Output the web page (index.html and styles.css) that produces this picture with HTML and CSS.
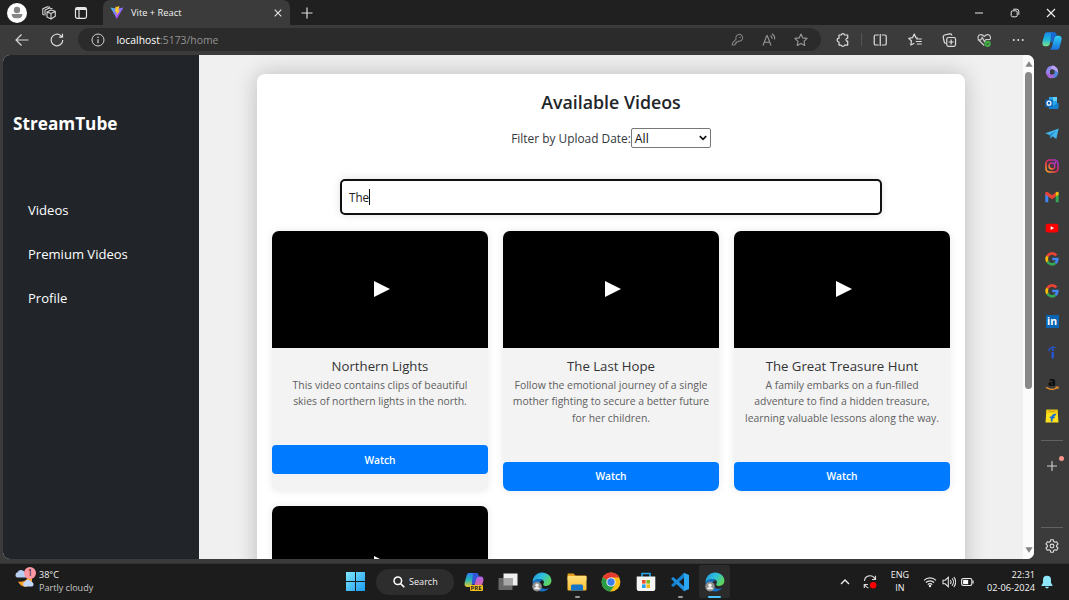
FILE: index.html
```html
<!DOCTYPE html>
<html lang="en">
<head>
<meta charset="utf-8">
<title>Vite + React</title>
<link rel="stylesheet" href="styles.css">
</head>
<body>
<svg class="defs" width="0" height="0" aria-hidden="true">
  <defs>
    <linearGradient id="cop1" x1="0" y1="0" x2="0" y2="1"><stop offset="0" stop-color="#1b86e8"/><stop offset=".5" stop-color="#19b4dc"/><stop offset="1" stop-color="#7fe08a"/></linearGradient>
    <linearGradient id="cop2" x1="0" y1="0" x2="0" y2="1"><stop offset="0" stop-color="#2fd0f2"/><stop offset="1" stop-color="#1a6fe0"/></linearGradient>
    <linearGradient id="pre1" x1="0" y1="0" x2="0" y2="1"><stop offset="0" stop-color="#2b7df0"/><stop offset=".5" stop-color="#27b6b4"/><stop offset="1" stop-color="#f0c929"/></linearGradient>
    <linearGradient id="pre2" x1="0" y1="0" x2="0" y2="1"><stop offset="0" stop-color="#a965f0"/><stop offset="1" stop-color="#f4627a"/></linearGradient>
    <linearGradient id="edg" x1="0" y1="0" x2="1" y2=".6"><stop offset="0" stop-color="#1e8fe0"/><stop offset=".5" stop-color="#2fc0dc"/><stop offset="1" stop-color="#5ed65a"/></linearGradient>
    <linearGradient id="win" x1="0" y1="0" x2="1" y2="1"><stop offset="0" stop-color="#7fe6ff"/><stop offset="1" stop-color="#1a9cf0"/></linearGradient>
    <linearGradient id="ig" x1="0" y1="1" x2="1" y2="0"><stop offset="0" stop-color="#ffb52e"/><stop offset=".45" stop-color="#f5264f"/><stop offset="1" stop-color="#9b2fe0"/></linearGradient>
    <linearGradient id="fold" x1="0" y1="0" x2="0" y2="1"><stop offset="0" stop-color="#ffe07a"/><stop offset="1" stop-color="#fbbd30"/></linearGradient>
    <linearGradient id="vite" x1="0" y1="0" x2="1" y2="1"><stop offset="0" stop-color="#41c7ff"/><stop offset=".7" stop-color="#a948fb"/></linearGradient>
    <symbol id="google" viewBox="0 0 14 14"><g fill="none" stroke-width="2.7"><path d="M11.3 3.5A5.3 5.3 0 0 0 2.4 4.4" stroke="#ea4335"/><path d="M2.4 4.4A5.3 5.3 0 0 0 2.4 9.6" stroke="#fbbc05"/><path d="M2.4 9.6A5.3 5.3 0 0 0 10.5 11" stroke="#34a853"/><path d="M10.5 11A5.3 5.3 0 0 0 12.3 7H7.2" stroke="#4285f4"/></g></symbol>
    <symbol id="edge" viewBox="0 0 20 20"><path d="M.6 10.5C.6 4.8 4.8.6 10 .6c5.4 0 9.4 3.7 9.4 8 0 3.4-2.4 5.3-5.2 5.3-2 0-3-.7-3-1.5 0-.6.8-.9.8-2.3 0-1.9-1.9-3.2-4.4-3.2-3 0-5.500 1.300-7 3.600z" fill="url(#edg)"/><path d="M.6 10.500C2 8 4.500 6.900 7.600 6.900c1.400 0 2.700.5 3.500 1.300-2.300 0-3.700 1.500-3.700 3.600 0 3 2.900 5.100 6 5.100 1.600 0 2.900-.5 3.900-1.100C15.700 18.200 13 19.400 10 19.400 4.500 19.400.6 15.500.6 10.500z" fill="#1470c4"/><circle cx="5" cy="14.600" r="4.800" fill="#8f8f8f"/><circle cx="5" cy="13.200" r="1.700" fill="#f2f2f2"/><path d="M2.100 17.200a2.900 2.200 0 0 1 5.800 0z" fill="#f2f2f2"/></symbol>
  </defs>
</svg>

<div class="desktop">
  <header class="tabstrip">
    <div class="avatar"><svg viewBox="0 0 20 20"><circle cx="10" cy="10" r="10" fill="#fff"/><circle cx="10" cy="7" r="3.200" fill="#858585"/><path d="M4.700 11h10.600v.8a4 4 0 0 1-4 3.500H8.700a4 4 0 0 1-4-3.500z" fill="#858585"/></svg></div>
    <svg class="strip-icon" viewBox="0 0 14 14"><g fill="none" stroke="#d6d6d6" stroke-width="1.100" stroke-linejoin="round"><path d="M9 4 13.300 5.300v4.900L9 13 5 11V6zM5 6l4 1.500 4.200-2M9 7.500V13"/><path d="M10.500 2.800 7.500 2 3 4v5.500M8 1.200 5.300.700.800 2.800v5.500l1 .7"/></g></svg>
    <svg class="strip-icon workspace" viewBox="0 0 14 14"><rect x="1.500" y="1.700" width="11" height="10.600" rx="1.800" fill="none" stroke="#e6e6e6" stroke-width="1.200"/><path d="M1.500 3.500h11M5 3.500v8.500" stroke="#e6e6e6" stroke-width="1.200"/><path d="M2 2h10v2H2z" fill="#e6e6e6"/></svg>
    <div class="tab">
      <svg class="vite" viewBox="0 0 14 14"><path d="M.5 1.500 6.800 13 13.500 1.500 7 2.800z" fill="url(#vite)"/><path d="M9.500.300 5.500 1.100l-.3 5H6.700L6.200 9.500 9.900 4.500H8.200z" fill="#ffc82a"/></svg>
      <span class="tab-title">Vite + React</span>
      <svg class="close" viewBox="0 0 8 8"><path d="M.7.7l6.600 6.600M7.300.7.7 7.300" stroke="#e6e6e6" stroke-width="1.100"/></svg>
    </div>
    <svg class="new-tab" viewBox="0 0 12 12"><path d="M6 .5v11M.5 6h11" stroke="#dcdcdc" stroke-width="1.200"/></svg>
    <div class="window-controls">
      <svg viewBox="0 0 10 10"><path d="M1 5h8" stroke="#e8e8e8"/></svg>
      <svg viewBox="0 0 10 10"><rect x="1.200" y="2.800" width="6" height="6" rx="1.400" fill="none" stroke="#e8e8e8"/><path d="M3.200 1.200h3.600a2 2 0 0 1 2 2v3.600" fill="none" stroke="#e8e8e8"/></svg>
      <svg viewBox="0 0 10 10"><path d="M1 1l8 8M9 1 1 9" stroke="#f0f0f0" stroke-width="1.100"/></svg>
    </div>
  </header>

  <div class="browser">
    <div class="browser-main">
      <div class="toolbar">
        <svg class="nav-icon" viewBox="0 0 14 14"><path d="M13.500 7H1M6.500 1.500 1 7l5.500 5.500" fill="none" stroke="#d8d8d8" stroke-width="1.200"/></svg>
        <svg class="nav-icon" viewBox="0 0 14 14"><path d="M12.800 7A5.800 5.800 0 1 1 10.800 2.600L12.300 4M12.500 .8V4.200H9" fill="none" stroke="#d8d8d8" stroke-width="1.200"/></svg>
        <div class="address">
          <svg class="info" viewBox="0 0 14 14"><circle cx="7" cy="7" r="6" fill="none" stroke="#d0d0d0"/><path d="M7 6.200v4" stroke="#d0d0d0" stroke-width="1.200"/><circle cx="7" cy="4.200" r=".8" fill="#d0d0d0"/></svg>
          <span class="url"><b>localhost</b>:5173/home</span>
          <div class="address-actions">
            <svg viewBox="0 0 14 14"><g transform="translate(1.200 1) scale(.85)"><path d="M5.800 6A4 4 0 1 1 8.500 8.300L7.500 9.300H6.200V10.700H4.800V12.200L3.500 13H1.300V10.700z" fill="none" stroke="#858585" stroke-width="1.200"/><circle cx="10.300" cy="3.700" r=".9" fill="#858585"/></g></svg>
            <svg viewBox="0 0 14 14"><path d="M1 12.500 4.700 2.800h.6L9 12.500M2.300 9.300h5.500M8.500 2.500a3.200 3.200 0 0 1 1.500 3.300M10 .8a5.500 5.500 0 0 1 2.600 5.500" fill="none" stroke="#989898" stroke-width="1.100"/></svg>
            <svg viewBox="0 0 14 14"><path d="M7 1l1.800 3.900 4.300.5L10 8.300l.8 4.200L7 10.400l-3.800 2.100.8-4.200L.9 5.400l4.300-.5z" fill="none" stroke="#999" stroke-width="1.100" stroke-linejoin="round"/></svg>
          </div>
        </div>
        <svg class="extensions" viewBox="0 0 14 14"><path d="M3 2h2.300a1.700 1.700 0 0 1 3.300 0h3.100v3.200c-2.300-.3-2.300 3.300 0 3v3.900H8.500a1.700 1.700 0 0 1-3.300 0H3V9a1.900 1.900 0 0 1 0-3.800z" fill="none" stroke="#dedede" stroke-width="1.200" stroke-linejoin="round"/></svg>
        <span class="tool-divider"></span>
        <div class="tools">
          <svg viewBox="0 0 14 14"><path d="M5.500 2H2.300Q1 2 1 3.300v7.400Q1 12 2.300 12h3.200M8.500 2h3.200Q13 2 13 3.300v7.400q0 1.300-1.300 1.300H8.500M7 1v12" fill="none" stroke="#dedede" stroke-width="1.200"/></svg>
          <svg viewBox="0 0 14 14"><path d="M9.500 5 7.700 4.700 6 1 4.300 4.700.5 5.300 3.200 8l-.7 4L6 10.200M8 6h5.500M7.500 8.500h6M8.500 11h5" fill="none" stroke="#dedede" stroke-width="1.200" stroke-linejoin="round"/></svg>
          <svg viewBox="0 0 14 14"><rect x="4.500" y="4.500" width="8.800" height="8.800" rx="1.800" fill="none" stroke="#dedede" stroke-width="1.200"/><path d="M3.500 10.500A2 2 0 0 1 2 9L.9 4A2 2 0 0 1 2.300 2L7.500.800A2 2 0 0 1 9.700 2.500M8.900 6.500v5M6.400 9h5" fill="none" stroke="#dedede" stroke-width="1.200"/></svg>
          <svg viewBox="0 0 14 14"><path d="M7 12.500 1.500 7C-.2 4.500 1 1.700 3.700 1.700 5.500 1.700 6.500 2.800 7 3.500c.5-.7 1.500-1.800 3.300-1.800 2.700 0 3.900 2.800 2.200 5.300M.5 6.800h3L5 4.500l2.200 4 1.300-2h4" fill="none" stroke="#cdcdcd" stroke-width="1.200"/><circle cx="10.300" cy="10.800" r="3.200" fill="#45a848"/><path d="M8.900 10.800l1 1 1.800-2" stroke="#214d24" fill="none" stroke-width=".8"/></svg>
          <svg viewBox="0 0 14 14"><g fill="#e2e2e2"><circle cx="2.500" cy="7" r="1"/><circle cx="7" cy="7" r="1"/><circle cx="11.500" cy="7" r="1"/></g></svg>
        </div>
      </div>

      <div class="viewport">
        <aside class="app-sidebar">
          <h1 class="brand">StreamTube</h1>
          <nav class="menu"><a>Videos</a><a>Premium Videos</a><a>Profile</a></nav>
        </aside>
        <main class="page">
          <section class="panel">
            <h2 class="heading">Available Videos</h2>
            <div class="filter"><label>Filter by Upload Date:</label><div class="select"><span>All</span><svg viewBox="0 0 8 6"><path d="M.8 1.200 4 4.400 7.200 1.200" fill="none" stroke="#111" stroke-width="1.700"/></svg></div></div>
            <div class="search"><span>The</span><i class="caret"></i></div>
            <div class="grid">
              <article class="card"><div class="video"><svg viewBox="0 0 16 16"><path d="M0 0 16 8 0 16z" fill="#fff"/></svg></div><h3>Northern Lights</h3><p>This video contains clips of beautiful<br>skies of northern lights in the north.</p><button>Watch</button></article>
              <article class="card"><div class="video"><svg viewBox="0 0 16 16"><path d="M0 0 16 8 0 16z" fill="#fff"/></svg></div><h3>The Last Hope</h3><p>Follow the emotional journey of a single<br>mother fighting to secure a better future<br>for her children.</p><button>Watch</button></article>
              <article class="card"><div class="video"><svg viewBox="0 0 16 16"><path d="M0 0 16 8 0 16z" fill="#fff"/></svg></div><h3>The Great Treasure Hunt</h3><p>A family embarks on a fun-filled<br>adventure to find a hidden treasure,<br>learning valuable lessons along the way.</p><button>Watch</button></article>
              <article class="card"><div class="video"><svg viewBox="0 0 16 16"><path d="M0 0 16 8 0 16z" fill="#fff"/></svg></div></article>
            </div>
          </section>
        </main>
        <div class="scrollbar">
          <svg viewBox="0 0 8 6"><path d="M4 .3 7.700 5.700H.3z" fill="#858585"/></svg>
          <span class="thumb"></span>
          <svg viewBox="0 0 8 6"><path d="M4 5.700 7.700.3H.3z" fill="#858585"/></svg>
        </div>
      </div>
    </div>

    <aside class="edge-bar">
      <div class="app copilot"><svg viewBox="0 0 20 20"><path d="M4.800 1.200h7.500c-1.300.5-1.800 1.600-2.300 3.500L8 12.200c-.6 2.200-1.400 3-3 3H3.200C.7 15.200-.1 13 .6 10.500L2.300 4c.5-1.800 1.200-2.800 2.500-2.800z" fill="url(#cop1)"/><path d="M15.200 18.800H7.700c1.300-.5 1.800-1.600 2.300-3.500l2-7.500c.6-2.200 1.400-3 3-3h1.800c2.500 0 3.300 2.200 2.600 4.700L17.700 16c-.5 1.800-1.200 2.800-2.500 2.800z" fill="url(#cop2)"/><path d="M9 1.200h3.300c1.800 0 2 1.600 2.700 3.600-1.700 0-2.500 1-3 3L10.700 12 8.500 10z" fill="#1768cf"/></svg></div>
      <div class="app"><svg viewBox="0 0 14 14"><path d="M7.500.5 3.500 1.800Q1 4 .7 7.500L2.500 10.500 5 9V5.500L8.500 3.500z" fill="#8f86ee"/><path d="M7.500.5Q11 .8 12.800 4.500L13.300 8 9.500 8V5.500L5.500 3.300z" fill="#b9a2f5"/><path d="M13.300 7.500Q13 11 9.500 13L5.500 13.300 4.500 10.500 9.300 8.500 9.500 5z" fill="#4f86e0"/><path d="M.8 7.500Q2 12.500 5.500 13.300L8.500 12.800 9.300 9.500 5 9z" fill="#a466d8"/><path d="M5 5.300 7.300 4.200 9.500 5.500V8.500L7 9.800 5 8.800z" fill="#3b3b3b"/></svg></div>
      <div class="app"><svg viewBox="0 0 14 14"><path d="M4 1h8v9H4z" fill="#2aa6ea"/><path d="M8 1h4v4H8z" fill="#61d0fa"/><path d="M3 7l5 3 5.500-3.500V12q0 1-1 1H4z" fill="#1582d0"/><rect x=".3" y="3.500" width="7.500" height="7.500" rx=".8" fill="#0f65b8"/><ellipse cx="4" cy="7.200" rx="1.900" ry="2" fill="none" stroke="#fff" stroke-width="1.200"/></svg></div>
      <div class="app"><svg viewBox="0 0 14 14"><path d="M.3 6.200 13.700 1.500 11.300 12 7.500 9.300 5.500 11.500 4.500 8z" fill="#42b6ec"/><path d="M4.500 8 11.500 3.500 6 8.500l-.5 3z" fill="#1a78b8"/></svg></div>
      <div class="app"><svg viewBox="0 0 14 14"><rect x="1" y="1" width="12" height="12" rx="3.500" fill="none" stroke="url(#ig)" stroke-width="1.600"/><circle cx="7" cy="7" r="2.900" fill="none" stroke="url(#ig)" stroke-width="1.500"/><circle cx="10.500" cy="3.500" r=".9" fill="#d742c8"/></svg></div>
      <div class="app"><svg viewBox="0 0 14 14"><path d="M.3 3v9.200h3V6z" fill="#4285f4"/><path d="M13.700 3v9.200h-3V6z" fill="#34a853"/><path d="M.3 3Q1.500 1 3.300 2.500L7 5.300l3.700-2.800v4L7 9.200 3.300 6.500.3 4.500z" fill="#ea4335"/><path d="M10.700 2.500Q13 1 13.700 3v1.500l-3 2z" fill="#fbbc04"/></svg></div>
      <div class="app"><svg viewBox="0 0 14 14"><rect x=".7" y="2.700" width="12.600" height="8.800" rx="2" fill="#fe0000"/><path d="M5.700 5.200 9 7.100 5.700 9z" fill="#fff"/></svg></div>
      <div class="app"><svg><use href="#google"/></svg></div>
      <div class="app"><svg><use href="#google"/></svg></div>
      <div class="app"><span class="linkedin">in</span></div>
      <div class="app"><svg viewBox="0 0 14 14"><path d="M7.700 6v6.500" stroke="#2557e0" stroke-width="2.200"/><circle cx="7.700" cy="3.700" r="1.300" fill="#2557e0"/><path d="M3.500 5C4.500 1.500 7.500.200 10.500 1.800" fill="none" stroke="#2557e0" stroke-width="1.200"/></svg></div>
      <div class="app amazon"><span>a</span><svg viewBox="0 0 14 5"><path d="M1 1.200Q7 5.200 12 1.700M10.300 1H13v2" fill="none" stroke="#f0952a" stroke-width="1.200"/></svg></div>
      <div class="app"><svg viewBox="0 0 14 14"><path d="M1.500.7h11L13.500 13.500H.5z" fill="#ffe01b"/><path d="M1.500.7h11l.3 3.300H1.200z" fill="#f3c613"/><path d="M4.500 1v1.500h5V1" fill="none" stroke="#d0a410"/><path d="M11 5.700Q8 5 7.300 8L6.500 12.500M4.800 8.300h5" fill="none" stroke="#176bd6" stroke-width="1.800"/></svg></div>
      <span class="bar-line"></span>
      <div class="add"><svg viewBox="0 0 10 10"><path d="M5 0v10M0 5h10" stroke="#d0d0d0" stroke-width="1.100"/></svg><i></i></div>
      <span class="bar-line bottom"></span>
      <svg class="gear" viewBox="0 0 14 14"><path d="M5.700.8h2.600l.4 1.800 1.200.7 1.800-.6 1.300 2.300L11.600 6.300v1.400L13 9l-1.300 2.300-1.800-.6-1.200.7-.4 1.800H5.700l-.4-1.800-1.200-.7-1.800.6L1 9l1.400-1.300V6.300L1 5l1.300-2.300 1.800.6 1.200-.7z" fill="none" stroke="#dedede" stroke-width="1.100" stroke-linejoin="round"/><circle cx="7" cy="7" r="1.900" fill="none" stroke="#dedede" stroke-width="1.100"/></svg>
    </aside>
  </div>

  <footer class="taskbar">
    <div class="weather">
      <svg viewBox="0 0 22 22"><path d="M4 15.500Q9 16.500 12 14L15 9l3 3v5l-6 4q-5.500-.5-8-5.500z" fill="#f6a02e"/><path d="M3 11.500a2.800 2.800 0 0 1 .5-5.200A4 4 0 0 1 11 7l1 4.500z" fill="#b7cdf2"/><path d="M10.500 20.500a2.500 2.500 0 0 1 .5-4.700 3.500 3.500 0 0 1 6.500.3 2.300 2.300 0 0 1 .7 4.400z" fill="#c3d8fa"/></svg>
      <span class="badge">1</span>
      <div class="weather-text"><b>38°C</b><span>Partly cloudy</span></div>
    </div>
    <div class="dock">
      <svg class="start" viewBox="0 0 19 19"><path d="M0 0h9v9H0zM10 0h9v9h-9zM0 10h9v9H0zM10 10h9v9h-9z" fill="url(#win)"/></svg>
      <div class="task-search"><svg viewBox="0 0 12 12"><circle cx="4.800" cy="4.800" r="3.800" fill="none" stroke="#fff" stroke-width="1.500"/><path d="M7.600 7.600 11.300 11.300" stroke="#fff" stroke-width="1.600"/></svg><span>Search</span></div>
      <div class="task pre"><svg viewBox="0 0 20 20"><path d="M5 1h7.500C11 1.500 10.500 3 10 5L8 12c-.5 2-1.500 3-3 3H3.500C1 15 0 13 .7 10.500L2.500 4C3 2 3.700 1 5 1z" fill="url(#pre1)"/><path d="M9 1h3.500c1.800 0 2 1.600 2.700 3.600-1.700 0-2.500 1-3 3L10.700 12l-3 1z" fill="#3157d8"/><path d="M15 18H8c1-.5 1.500-1.500 2-3.500l2-7c.5-2 1.500-3 3-3h1.500c2.500 0 3.500 2 2.800 4.500L17.500 15c-.5 2-1.200 3-2.500 3z" fill="url(#pre2)"/></svg><em>PRE</em></div>
      <div class="task"><svg viewBox="0 0 20 20"><rect x="5.500" y="1.500" width="14" height="12" fill="#efefef"/><rect x=".5" y="6" width="14" height="12" fill="#686868"/><path d="M5.500 6h9v7.500h-9z" fill="#a7a7a7"/></svg></div>
      <div class="task"><svg><use href="#edge"/></svg></div>
      <div class="task open"><svg viewBox="0 0 20 20"><path d="M.5 2.500q0-1 1-1h5l2 2h10q1 0 1 1V8H.5z" fill="#e5a01f"/><rect x=".5" y="4" width="19" height="14.500" rx="1" fill="url(#fold)"/><path d="M4 18.500V14q0-1.500 1.500-1.500h9Q16 12.500 16 14v4.500z" fill="#1675c8"/></svg></div>
      <div class="task"><svg viewBox="0 0 20 20"><circle cx="10" cy="10" r="9.400" fill="#fbc116"/><path d="M10 10 1.700 5.500A9.400 9.400 0 0 1 18.300 5.500H10z" fill="#e33b2e"/><path d="M10 10 1.700 5.500A9.400 9.400 0 0 0 9.200 19.400L14 12.500z" fill="#2a9c48"/><circle cx="10" cy="10" r="4.600" fill="#fff"/><circle cx="10" cy="10" r="3.700" fill="#3b7ded"/></svg></div>
      <div class="task"><svg viewBox="0 0 20 20"><path d="M6 5V1.500h8V5" fill="none" stroke="#26a9e8" stroke-width="1.600"/><path d="M.7 4.500h18.600V17q0 2-2 2H2.700q-2 0-2-2z" fill="#f5f5f5"/><path d="M6 8h3.600v3.600H6z" fill="#f0502a"/><path d="M10.400 8H14v3.600h-3.600z" fill="#7fbb16"/><path d="M6 12.400h3.600V16H6z" fill="#1fa3ec"/><path d="M10.400 12.400H14V16h-3.600z" fill="#fdb913"/></svg></div>
      <div class="task open"><svg viewBox="0 0 20 20"><path d="M14 .8 19 3v14l-5 2.200z" fill="#2ba6f0"/><path d="M14 .8v5L3.200 15 1 13.300z" fill="#1580cf"/><path d="M14 19.200v-5L3.200 5 1 6.700z" fill="#1d8fdd"/></svg></div>
      <div class="task active"><svg><use href="#edge"/></svg></div>
    </div>
    <div class="tray">
      <svg class="chevron" viewBox="0 0 10 6"><path d="M1 5 5 1l4 4" fill="none" stroke="#f0f0f0" stroke-width="1.400"/></svg>
      <svg class="sync" viewBox="0 0 14 14"><path d="M1.500 6A5.500 5.500 0 0 1 12 4M12.500.800V4.500H9M5.500 13A5.500 5.500 0 0 1 2 10M1.300 13V9.500H5" fill="none" stroke="#d4d4d4" stroke-width="1.200"/><circle cx="10.200" cy="10.300" r="3.200" fill="#f00"/></svg>
      <div class="lang"><span>ENG</span><span>IN</span></div>
      <svg class="wifi" viewBox="0 0 14 12"><g fill="none" stroke="#e2e2e2" stroke-width="1.200"><path d="M1 4.300a8.500 8.500 0 0 1 12 0M2.900 6.500a5.800 5.800 0 0 1 8.200 0M4.800 8.600a3.100 3.100 0 0 1 4.400 0"/></g><circle cx="7" cy="10" r="1.200" fill="#eee"/></svg>
      <svg class="sound" viewBox="0 0 14 12"><path d="M1 4.200h2.200L6.300 1.300v9.400L3.200 7.800H1zM8.200 4a3 3 0 0 1 0 4M10 2.400a5.200 5.200 0 0 1 0 7.200M11.800 1a7.500 7.500 0 0 1 0 10" fill="none" stroke="#e2e2e2" stroke-width="1.100"/></svg>
      <svg class="battery" viewBox="0 0 14 10"><rect x=".7" y="1.200" width="11" height="7.600" rx="1.800" fill="none" stroke="#eee" stroke-width="1.200"/><path d="M2.300 2.700h5.400v4.600H2.300z" fill="#fff"/><path d="M13 3.500v3" stroke="#eee" stroke-width="1.200"/></svg>
      <div class="clock"><span>22:31</span><span>02-06-2024</span></div>
      <svg class="bell" viewBox="0 0 12 14"><path d="M6 .8a4 4 0 0 1 4 4v3l1.500 2.500v.7H.5v-.7L2 7.800v-3a4 4 0 0 1 4-4zM4.200 11.700h3.600a1.800 1.800 0 0 1-3.600 0z" fill="#8ee6fb"/></svg>
    </div>
  </footer>
</div>
</body>
</html>
```

FILE: styles.css
```css
* { box-sizing: border-box; }
body { margin: 0; font-family: "Open Sans", "Noto Sans", sans-serif; }
svg { display: block; flex: none; }
h1, h2, h3, p { margin: 0; }
.defs { position: absolute; }
.desktop { width: 1069px; height: 600px; overflow: hidden; display: flex; flex-direction: column; background: #3b3b3b; }

/* Tab strip */
.tabstrip { height: 25px; flex: none; background: #202020; display: flex; align-items: center; }
.avatar { width: 20px; height: 20px; margin-left: 7px; }
.avatar svg { width: 20px; height: 20px; }
.strip-icon { width: 14px; height: 14px; margin-left: 15px; }
.strip-icon.workspace { margin-left: 18px; }
.tab { width: 187px; height: 25px; margin-left: 15px; padding: 0 8px 0 7px; border-radius: 7px 7px 0 0; background: #3b3b3b; display: flex; align-items: center; }
.vite { width: 14px; height: 14px; }
.tab-title { margin-left: 7px; font-size: 9.300px; color: #f4f4f4; flex: 1; white-space: nowrap; }
.close { width: 8px; height: 8px; }
.new-tab { width: 12px; height: 12px; margin-left: 11px; }
.window-controls { margin-left: auto; display: flex; gap: 26px; padding-right: 13px; }
.window-controls svg { width: 10px; height: 10px; }

/* Browser frame */
.browser { flex: 1; display: flex; min-height: 0; }
.browser-main { width: 1035px; display: flex; flex-direction: column; padding: 0 1px 4px 3px; }
.toolbar { height: 30px; flex: none; display: flex; align-items: center; padding: 0 0 1px 12px; }
.nav-icon { width: 14px; height: 14px; margin-right: 20.500px; }
.address { width: 743px; height: 23px; flex: none; margin-left: -6px; border-radius: 12px; background: #2b2b2b; display: flex; align-items: center; padding: 0 4px 0 13px; }
.info { width: 14px; height: 14px; }
.url { margin-left: 11.500px; font-size: 10.400px; color: #939393; }
.url b { font-weight: 400; color: #fff; }
.address-actions { display: flex; margin-left: auto; }
.address-actions svg { width: 32px; height: 14px; }
.extensions { width: 32px; height: 14px; margin-left: 6px; }
.tool-divider { width: 1px; height: 13px; flex: none; margin: 0 1px 0 2px; background: #555; }
.tools { display: flex; flex: none; }
.tools svg { width: 34.500px; height: 14px; }

/* Page */
.viewport { flex: 1; min-height: 0; display: flex; border-radius: 7px; overflow: hidden; background: #f0f0f0; }
.app-sidebar { width: 196px; flex: none; background: #212529; color: #fff; padding: 56px 10px 0; }
.brand { font-size: 17.200px; line-height: 26px; font-weight: 700; }
.menu { display: flex; flex-direction: column; margin-top: 50.800px; padding-left: 15px; font-size: 13.050px; line-height: 44.200px; }
.page { width: 824px; flex: none; overflow: hidden; padding: 19px 58px 0; background: #f0f0f0; }
.panel { width: 708px; height: 560px; padding: 15px; border-radius: 8px; background: #fff; box-shadow: 0 0 22px rgba(0,0,0,.22); display: flex; flex-direction: column; align-items: center; }
.heading { font-size: 17.800px; line-height: 26px; font-weight: 600; color: #212529; }
.filter { display: flex; align-items: center; height: 20px; margin-top: 13px; font-size: 11.900px; color: #33383c; }
.select { width: 80px; height: 20px; border: 1px solid #777; border-radius: 2px; display: flex; align-items: center; justify-content: space-between; padding: 0 3px; color: #111; background: #fff; font-size: 12.300px; }
.select svg { width: 8px; height: 6px; }
.search { width: 542px; height: 36px; flex: none; margin-top: 31px; border: 2px solid #101010; border-radius: 5px; box-shadow: 0 0 8px rgba(0,0,0,.12); padding: 0 7px; display: flex; align-items: center; font-size: 11.700px; color: #222; }
.caret { width: 1px; height: 16px; background: #111; }
.grid { width: 678px; margin-top: 16px; display: grid; grid-template-columns: repeat(3, 216px); gap: 15px; grid-template-rows: 260px 200px; }
.card { border-radius: 7px; overflow: hidden; background: #f3f3f3; box-shadow: 0 0 8px rgba(0,0,0,.09); text-align: center; }
.video { height: 117px; background: #000; display: flex; align-items: center; justify-content: center; padding: 0 0 1px 4px; }
.video svg { width: 16px; height: 16px; }
.card h3 { margin-top: 8px; font-size: 13.200px; line-height: 20px; font-weight: 400; color: #333; }
.card p { margin-top: 1px; font-size: 10.400px; line-height: 16.400px; color: #606060; white-space: nowrap; }
.card button { display: block; width: 100%; height: 29px; margin: 35.500px 0 0; padding: 0; border: 0; border-radius: 4px; background: #007bff; color: #fff; font: 600 10.200px "Open Sans", sans-serif; }
.scrollbar { width: 11px; flex: none; background: #fbfbfb; display: flex; flex-direction: column; align-items: center; padding: 6px 0 6px; }
.scrollbar svg { width: 8px; height: 6px; }
.thumb { width: 7px; height: 317px; margin: 5px 0 auto; border-radius: 4px; background: #888; }

/* Browser app bar */
.edge-bar { width: 34px; display: flex; flex-direction: column; align-items: center; }
.app { height: 31.250px; flex: none; display: flex; align-items: center; justify-content: center; }
.app svg { width: 14px; height: 14px; }
.app.copilot svg { width: 20px; height: 20px; }
.linkedin { width: 13px; height: 13px; background: #0a66b4; color: #fff; font-size: 10.500px; line-height: 12px; font-weight: 700; text-align: center; }
.amazon { flex-direction: column; }
.amazon span { font-size: 13px; line-height: 9px; font-weight: 700; color: #0a0a0a; }
.amazon svg { width: 14px; height: 5px; }
.bar-line { width: 22px; height: 1px; flex: none; margin-top: 9px; background: #626262; }
.add { width: 34px; height: 20px; margin-top: 15px; display: flex; align-items: center; justify-content: center; position: relative; }
.add svg { width: 10px; height: 10px; }
.add i { position: absolute; left: 24px; top: 0; width: 5px; height: 5px; border-radius: 50%; background: #f8958c; }
.bar-line.bottom { margin-top: auto; }
.gear { width: 14px; height: 14px; margin: 11px 0 10px; }

/* Taskbar */
.taskbar { height: 37px; flex: none; background: #1c1c1c; border-top: 1px solid #333; display: flex; color: #f4f4f4; font-size: 9px; }
.weather { width: 345px; padding: 2px 0 0 14px; display: flex; position: relative; }
.weather svg { width: 22px; height: 22px; }
.badge { position: absolute; left: 24px; top: 3px; width: 12px; height: 12px; border-radius: 50%; background: #ff97a4; color: #222; line-height: 12px; text-align: center; }
.weather-text { margin: 3px 0 0 3px; line-height: 12.500px; display: flex; flex-direction: column; }
.weather-text b { font-weight: 400; }
.weather-text span { color: #c6c6c6; font-size: 9.050px; }
.dock { display: flex; align-items: center; padding-bottom: 1px; }
.start { width: 19px; height: 19px; margin-left: 1px; }
.task-search { width: 78px; height: 26px; margin: 0 2.500px 0 11px; border-radius: 13px; background: #2d2d2d; display: flex; align-items: center; padding-left: 17px; gap: 4px; font-size: 9.100px; }
.task-search svg { width: 12px; height: 12px; }
.task { width: 34.400px; height: 33px; display: flex; align-items: center; justify-content: center; position: relative; }
.task svg { width: 20px; height: 20px; }
.pre em { position: absolute; left: 13px; top: 20px; padding: 0 1px; border-radius: 1px; background: #f7c21c; color: #222; font: 700 6px/6px "Open Sans", sans-serif; }
.open::after, .active::after { content: ""; position: absolute; left: 15px; bottom: 0; width: 5px; height: 2px; border-radius: 1px; background: #9a9a9a; }
.active { width: 31px; margin-left: 2px; background: #2b2b2b; border-radius: 3px; }
.active::after { left: 9px; width: 13px; background: #4cc2ff; }
.tray { margin-left: auto; display: flex; align-items: center; padding: 0 16px 1px 0; }
.chevron { width: 10px; height: 6px; }
.sync { width: 14px; height: 14px; margin-left: 13px; }
.lang { width: 20px; margin: 0 13px; display: flex; flex-direction: column; align-items: center; line-height: 12.500px; font-size: 9px; }
.wifi { width: 14px; height: 12px; }
.sound { width: 14px; height: 12px; margin-left: 5px; }
.battery { width: 13px; height: 10px; margin-left: 5px; }
.clock { width: 50px; margin: 0 6px 0 11px; display: flex; flex-direction: column; align-items: flex-end; line-height: 12.500px; font-size: 9.200px; white-space: nowrap; }
.bell { width: 12px; height: 14px; }
```
